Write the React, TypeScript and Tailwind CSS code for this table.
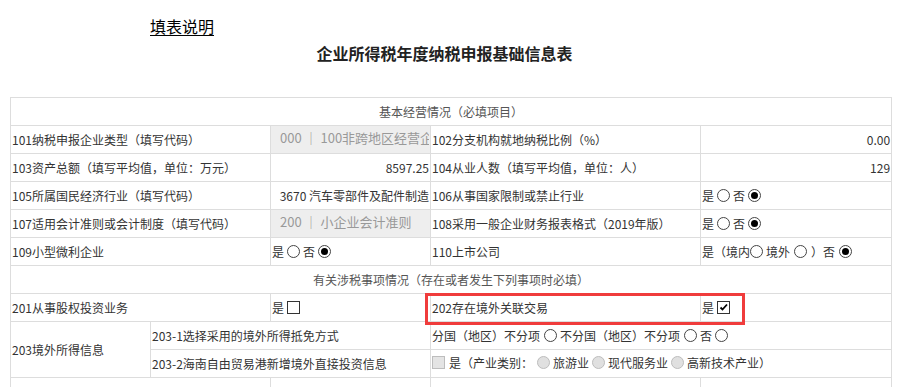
import React from 'react';

const font = { fontFamily: '"Noto Sans CJK SC", "Liberation Sans", sans-serif' };

function Radio({ checked = false, disabled = false }: { checked?: boolean; disabled?: boolean }) {
  return (
    <span
      className={`inline-flex items-center justify-center w-[13px] h-[13px] rounded-full border align-middle ${
        disabled ? 'border-[#bdbdbd] bg-[#e0e0e0]' : 'border-[#444] bg-white'
      }`}
    >
      {checked && <span className="w-[7px] h-[7px] rounded-full bg-black" />}
    </span>
  );
}

function Checkbox({ checked = false, disabled = false }: { checked?: boolean; disabled?: boolean }) {
  return (
    <span
      className={`inline-flex items-center justify-center w-[13px] h-[13px] border align-middle ${
        disabled ? 'border-[#bdbdbd] bg-[#e4e4e4]' : 'border-[#333] bg-white'
      }`}
    >
      {checked && (
        <svg width="11" height="11" viewBox="0 0 11 11">
          <path d="M2.5 5.5 L4.5 7.5 L9 2.5" fill="none" stroke="#000" strokeWidth="1.8" />
        </svg>
      )}
    </span>
  );
}

function YesNo() {
  return (
    <span className="inline-flex items-center gap-[3px]">
      是 <Radio /> 否 <Radio checked />
    </span>
  );
}

const td = 'border border-[#ddd] h-[28px] px-px py-0 align-middle whitespace-nowrap overflow-hidden';
const selectTd = `${td} bg-[#eee] text-[#999] text-[13px] pl-[9px]`;

export default function App() {
  return (
    <div className="w-[902px] h-[387px] overflow-hidden bg-white text-[12px] text-[#333]" style={font}>
      {/* 标题区 */}
      <div className="pl-[150px] pt-[16px] leading-[20px]">
        <span className="text-[16px] text-black underline underline-offset-2">填表说明</span>
      </div>
      <div className="w-[889px] flex justify-center mt-[4px]">
        <h1 className="text-[16px] font-bold leading-[22px] text-[#222]">企业所得税年度纳税申报基础信息表</h1>
      </div>

      {/* 表格 */}
      <div className="relative ml-[10px] mt-[33px] w-[881px]">
        <table className="w-[881px] table-fixed border-collapse">
          <colgroup>
            <col className="w-[140px]" />
            <col className="w-[120px]" />
            <col className="w-[160px]" />
            <col className="w-[270px]" />
            <col className="w-[191px]" />
          </colgroup>
          <tbody>
            <tr>
              <td colSpan={5} className={`${td} text-center text-[#555]`}>
                基本经营情况（必填项目）
              </td>
            </tr>
            <tr>
              <td colSpan={2} className={td}>101纳税申报企业类型（填写代码）</td>
              <td className={selectTd}>
                <div className="overflow-hidden pb-[3px]">000 ｜ 100非跨地区经营企业</div>
              </td>
              <td className={td}>102分支机构就地纳税比例（%）</td>
              <td className={`${td} text-right`}>0.00</td>
            </tr>
            <tr>
              <td colSpan={2} className={td}>103资产总额（填写平均值，单位：万元）</td>
              <td className={`${td} text-right`}>8597.25</td>
              <td className={td}>104从业人数（填写平均值，单位：人）</td>
              <td className={`${td} text-right`}>129</td>
            </tr>
            <tr>
              <td colSpan={2} className={td}>105所属国民经济行业（填写代码）</td>
              <td className={`${td} text-right`}>3670 汽车零部件及配件制造</td>
              <td className={td}>106从事国家限制或禁止行业</td>
              <td className={td}><YesNo /></td>
            </tr>
            <tr>
              <td colSpan={2} className={td}>107适用会计准则或会计制度（填写代码）</td>
              <td className={selectTd}>
                <div className="overflow-hidden pb-[3px]">200 ｜ 小企业会计准则</div>
              </td>
              <td className={td}>108采用一般企业财务报表格式（2019年版）</td>
              <td className={td}><YesNo /></td>
            </tr>
            <tr>
              <td colSpan={2} className={td}>109小型微利企业</td>
              <td className={td}><YesNo /></td>
              <td className={td}>110上市公司</td>
              <td className={td}>
                <span className="inline-flex items-center">
                  是（境内<Radio /><span className="w-[3px]" />境外<span className="w-[4px]" /><Radio /><span className="w-[4px]" />）否<span className="w-[4px]" /><Radio checked />
                </span>
              </td>
            </tr>
            <tr>
              <td colSpan={5} className={`${td} text-center text-[#555]`}>
                有关涉税事项情况（存在或者发生下列事项时必填）
              </td>
            </tr>
            <tr>
              <td colSpan={2} className={td}>201从事股权投资业务</td>
              <td className={td}>
                <span className="inline-flex items-center gap-[3px]">是 <Checkbox /></span>
              </td>
              <td className={td}>202存在境外关联交易</td>
              <td className={td}>
                <span className="inline-flex items-center gap-[3px]">是 <Checkbox checked /></span>
              </td>
            </tr>
            <tr>
              <td rowSpan={2} className={td}>203境外所得信息</td>
              <td colSpan={2} className={td}>203-1选择采用的境外所得抵免方式</td>
              <td colSpan={2} className={td}>
                <span className="inline-flex items-center">
                  分国（地区）不分项<span className="w-[4px]" /><Radio /><span className="w-[3px]" />不分国（地区）不分项<span className="w-[4px]" /><Radio /><span className="w-[3px]" />否<span className="w-[3px]" /><Radio />
                </span>
              </td>
            </tr>
            <tr>
              <td colSpan={2} className={td}>203-2海南自由贸易港新增境外直接投资信息</td>
              <td colSpan={2} className={td}>
                <span className="inline-flex items-center">
                  <Checkbox disabled /><span className="w-[4px]" />是（产业类别：<span className="w-[4px]" /><Radio disabled /><span className="w-[3px]" />旅游业<span className="w-[3px]" /><Radio disabled /><span className="w-[3px]" />现代服务业<span className="w-[3px]" /><Radio disabled /><span className="w-[3px]" />高新技术产业）
                </span>
              </td>
            </tr>
            <tr>
              <td colSpan={2} className={td}></td>
              <td className={td}></td>
              <td className={td}></td>
              <td className={td}></td>
            </tr>
          </tbody>
        </table>

        {/* 高亮框 */}
        <div className="absolute left-[415px] top-[196px] w-[320px] h-[32px] border-[3px] border-[#f03c3c] pointer-events-none" />
      </div>
    </div>
  );
}
